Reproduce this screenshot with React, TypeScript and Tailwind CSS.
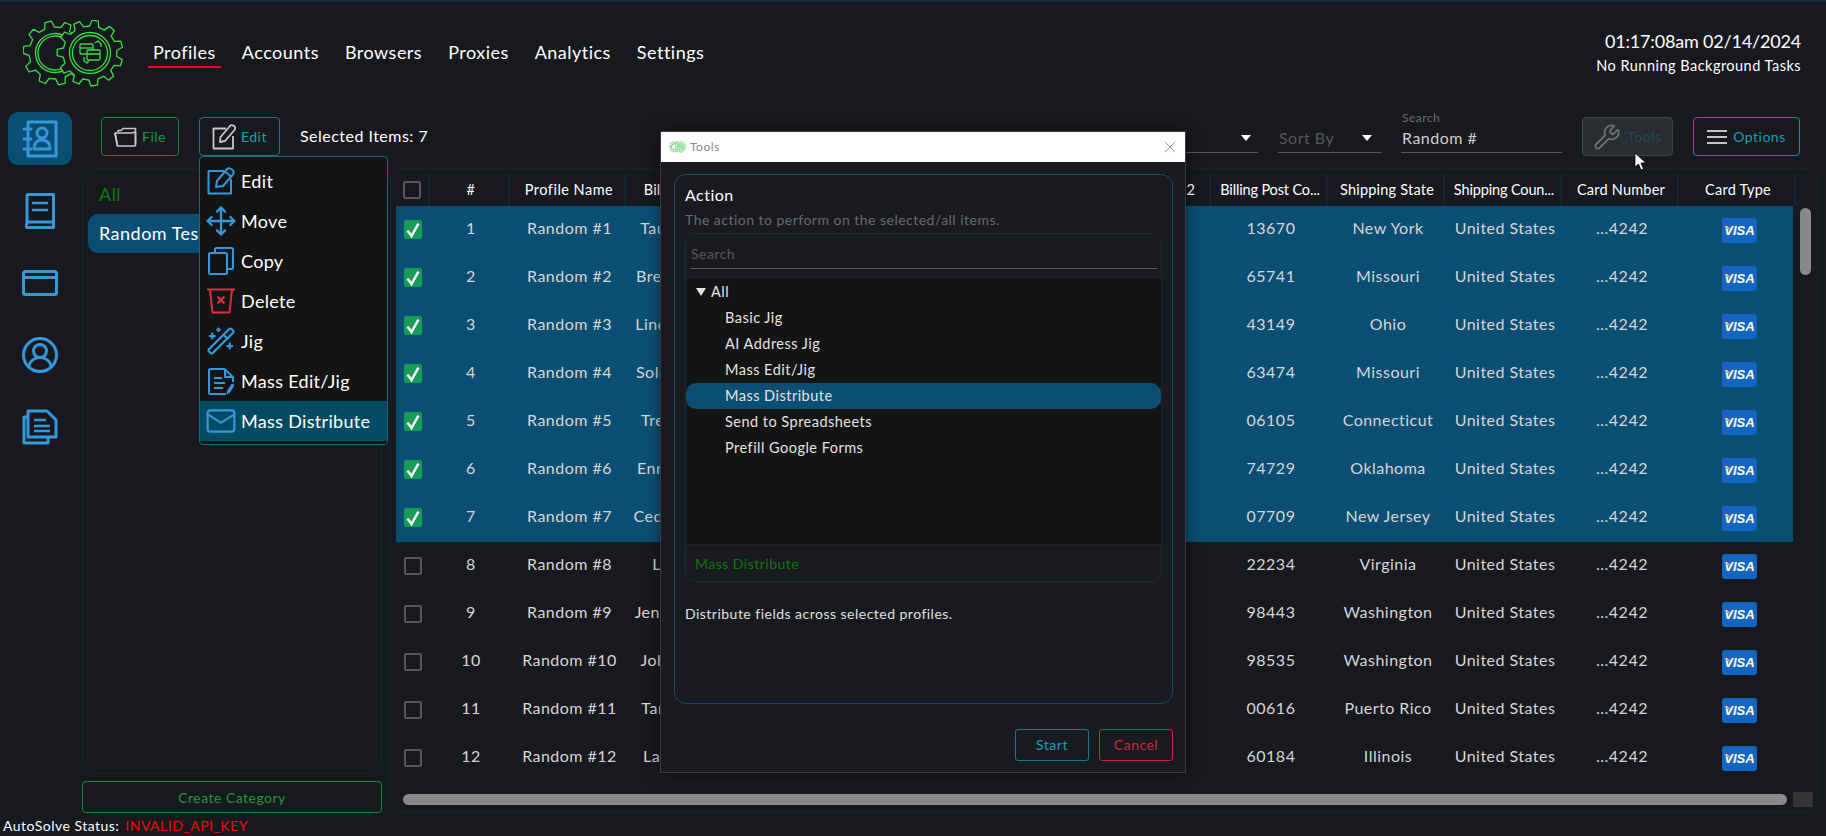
import { Mail, Move, WandSparkles, Wrench, X } from "lucide-react";

const FONT = "font-['Lato','Noto_Sans',sans-serif]";

const rows = [
  ["Taurean Hill", "13670", "New York"],
  ["Brenda Lowe", "65741", "Missouri"],
  ["Lindsey Pope", "43149", "Ohio"],
  ["Solomon Ray", "63474", "Missouri"],
  ["Trevor Lane", "06105", "Connecticut"],
  ["Enrique Diaz", "74729", "Oklahoma"],
  ["Cedric Moore", "07709", "New Jersey"],
  ["Lin Ortiz", "22234", "Virginia"],
  ["Jenna Walker", "98443", "Washington"],
  ["John Parker", "98535", "Washington"],
  ["Tara Jensen", "00616", "Puerto Rico"],
  ["Lana Reyes", "60184", "Illinois"],
];

const columns = [
  "Billing Name",
  "Billing Country",
  "Billing State",
  "Billing Line 1",
  "Billing Line 2",
  "Billing Post Co...",
  "Shipping State",
  "Shipping Coun...",
  "Card Number",
  "Card Type",
];

const navItems = ["Profiles", "Accounts", "Browsers", "Proxies", "Analytics", "Settings"];
const treeItems = ["Basic Jig", "AI Address Jig", "Mass Edit/Jig", "Mass Distribute", "Send to Spreadsheets", "Prefill Google Forms"];

// gear outline with square-ish teeth
function gearPath(cx: number, cy: number, rOut: number, rIn: number, teeth: number, start = 0) {
  const pts: string[] = [];
  const step = (Math.PI * 2) / teeth;
  for (let i = 0; i < teeth; i++) {
    const a = start + i * step;
    const list: [number, number][] = [
      [rIn, a - step * 0.3],
      [rOut, a - step * 0.17],
      [rOut, a + step * 0.17],
      [rIn, a + step * 0.3],
    ];
    list.forEach(([r, t]) => pts.push(`${(cx + r * Math.cos(t)).toFixed(1)},${(cy + r * Math.sin(t)).toFixed(1)}`));
  }
  return `M${pts.join("L")}Z`;
}

function Logo({ width = 100, height = 68, color = "#3ddc45", weight = 1.3, bg = "#17191e" }) {
  return (
    <svg width={width} height={height} viewBox="0 0 100 68" fill="none" stroke={color} strokeWidth={weight} strokeLinejoin="round">
      <path d={gearPath(32, 33, 32, 26, 10, 0.1)} />
      <circle cx="32" cy="33" r="19.5" strokeDasharray="94 30" transform="rotate(40 32 33)" />
      <circle cx="32" cy="33" r="17" strokeDasharray="82 25" transform="rotate(40 32 33)" />
      <path d={gearPath(67, 33, 33, 27, 11, 0.3)} fill={bg} />
      <circle cx="67" cy="33" r="20.5" />
      <circle cx="67" cy="33" r="17.5" />
      <rect x="57" y="24" width="13" height="10" rx="1" />
      <path d="M57 28h13" />
      <rect x="64" y="30" width="13" height="10" rx="1" fill={bg} />
      <path d="M64 34h13M72 23l3-2 3 3v3M61 37v4l3 2 2-2" />
    </svg>
  );
}

function ContactBook() {
  return (
    <svg width="36" height="38" viewBox="0 0 36 38" fill="none" stroke="#3498db" strokeWidth="3" strokeLinejoin="round">
      <rect x="6" y="2" width="28" height="34" />
      <path d="M2 9h7M2 19h7M2 29h7" strokeLinecap="round" />
      <circle cx="20" cy="13" r="5" />
      <path d="M12 29c0-6 3-9 8-9s8 3 8 9z" />
    </svg>
  );
}

function BookIcon() {
  return (
    <svg width="30" height="36" viewBox="0 0 30 36" fill="none" stroke="#3498db" strokeWidth="3" strokeLinejoin="round">
      <path d="M2 31V3a1.500 1.500 0 0 1 1.500-1.500H28.500V34.500H4A2 2 0 0 1 2 31ZM2 29H28.500" />
      <path d="M7 10h16M7 17h16" strokeWidth="2.600" />
    </svg>
  );
}

function CardIcon() {
  return (
    <svg width="36" height="26" viewBox="0 0 36 26" fill="none" stroke="#3498db" strokeWidth="3" strokeLinejoin="round">
      <rect x="1.500" y="1.500" width="33" height="23" rx="2" />
      <path d="M1.500 7.500h33" />
    </svg>
  );
}

function UserIcon() {
  return (
    <svg width="36" height="36" viewBox="0 0 36 36" fill="none" stroke="#3498db" strokeWidth="3">
      <circle cx="18" cy="18" r="16.500" />
      <circle cx="18" cy="14" r="6.500" />
      <path d="M6.500 30c1.500-6 6-9.500 11.500-9.500S28 24 29.500 30" />
    </svg>
  );
}

function DocsIcon() {
  return (
    <svg width="36" height="36" viewBox="0 0 36 36" fill="none" stroke="#3498db" strokeWidth="3" strokeLinejoin="round">
      <path d="M6 2h19l9 9v17H6z" />
      <path d="M6 8H2v26h24v-6" />
      <path d="M12 11h12M12 17h16M12 22h16" strokeWidth="2.600" />
    </svg>
  );
}

function EditMenuIcon() {
  return (
    <svg width="28" height="28" viewBox="0 0 28 28" fill="none" stroke="#3498db" strokeWidth="2" strokeLinejoin="round">
      <path d="M17 4H1.500v22.500H24V12" />
      <path d="M9 20l1-6L20 2c1-1 3-1 5 .500s2 3.500 1 5L16 19z" />
      <path d="M18 4.500l6 5" />
    </svg>
  );
}

function CopyIcon() {
  return (
    <svg width="26" height="28" viewBox="0 0 26 28" fill="none" stroke="#3498db" strokeWidth="2" strokeLinejoin="round">
      <rect x="7" y="1" width="18" height="21" rx="1.500" />
      <rect x="1" y="6" width="18" height="21" rx="1.500" fill="#141414" />
    </svg>
  );
}

function TrashIcon() {
  return (
    <svg width="28" height="26" viewBox="0 0 28 26" fill="none" stroke="#dc2e45" strokeWidth="2" strokeLinejoin="round">
      <path d="M0 1.500h28M3 2l2.500 22.500h17L25 2" />
      <path d="M10.500 8.500l7 7M17.500 8.500l-7 7" strokeWidth="2.200" />
    </svg>
  );
}

function MassEditIcon() {
  return (
    <svg width="26" height="27" viewBox="0 0 26 27" fill="none" stroke="#3498db" strokeWidth="2" strokeLinejoin="round">
      <path d="M18 26H2.500a1.500 1.500 0 0 1-1.500-1.500V2.500A1.500 1.500 0 0 1 2.500 1h14L25 9v5" />
      <path d="M17 1v8h8M6 10h8M6 15h11M6 20h9" />
      <path d="M19 26l1-4 4-6 2 1-4 7z" fill="#3498db" strokeWidth="1" />
    </svg>
  );
}

function FolderIcon() {
  return (
    <svg width="24" height="24" viewBox="0 0 24 24" fill="none" stroke="#c9c9c9" strokeWidth="1.600" strokeLinejoin="round">
      <path d="M4 7V5.500h3l2-2h12.500V19" />
      <path d="M1 8h17l3.500-1v13a1 1 0 0 1-1 1H3.500z" />
      <path d="M1 8l2.500 13" />
    </svg>
  );
}

function PencilSquareIcon() {
  return (
    <svg width="24" height="26" viewBox="0 0 24 26" fill="none" stroke="#c9c9c9" strokeWidth="1.800" strokeLinejoin="round">
      <path d="M14 4.500H1.500v20H21V12" />
      <path d="M8 18l.500-5L18 2c1-1 2.500-1 4 0s1.500 2.500.500 4L13 17z" />
    </svg>
  );
}

function Visa() {
  return (
    <div className="relative flex h-[25px] w-[35px] items-center justify-center rounded-[3px] bg-[#1565c0] font-['Liberation_Sans',sans-serif] tracking-normal">
      <span className="text-[13px] font-bold italic leading-none text-white">VISA</span>
      <span className="absolute left-[3px] top-[9px] h-[2px] w-[5px] rotate-[20deg] bg-[#f5b32a]" />
    </div>
  );
}

function Checkbox({ checked }: { checked?: boolean }) {
  if (checked) {
    return (
      <div className="flex h-[19px] w-[18px] items-center justify-center rounded-[2px] bg-[#169c58]">
        <svg width="14" height="16" viewBox="0 0 14 16" fill="none" stroke="#fff" strokeWidth="2.500">
          <path d="M1.500 8.500L5.500 14 12.500 1.500" />
        </svg>
      </div>
    );
  }
  return <div className="h-[18px] w-[18px] rounded-[2px] border-2 border-[#55585c]" />;
}

const menu = [
  { label: "Edit", icon: <EditMenuIcon /> },
  { label: "Move", icon: <Move size={32} color="#3498db" strokeWidth={1.700} className="shrink-0" /> },
  { label: "Copy", icon: <CopyIcon /> },
  { label: "Delete", icon: <TrashIcon /> },
  { label: "Jig", icon: <WandSparkles size={30} color="#3498db" strokeWidth={1.800} className="shrink-0" /> },
  { label: "Mass Edit/Jig", icon: <MassEditIcon /> },
  { label: "Mass Distribute", icon: <Mail size={32} color="#3498db" strokeWidth={1.600} className="shrink-0" /> },
];

export default function App() {
  return (
    <div className={`relative flex h-[836px] w-[1826px] flex-col overflow-hidden border-t-2 border-[#1a2a36] bg-[#17191e] tracking-[0.03em] text-white ${FONT}`}>
      {/* Header */}
      <div className="flex h-[110px] shrink-0 items-start">
        <div className="pl-[23px] pt-[18px]">
          <Logo />
        </div>
        <nav className="ml-[25px] flex gap-[16px] pt-[37px]">
          {navItems.map((n, i) => (
            <div key={n} className={`border-b-2 px-[5px] pb-[1px] text-[18px] leading-[26px] ${i === 0 ? "border-[#e0101c]" : "border-transparent"}`}>
              {n}
            </div>
          ))}
        </nav>
        <div className="ml-auto pr-[25px] pt-[26px] text-right">
          <div className="text-[18px] leading-[26px] tracking-[-0.01em]">01:17:08am 02/14/2024</div>
          <div className="mt-[2px] text-[14.500px] leading-[20px]">No Running Background Tasks</div>
        </div>
      </div>

      <div className="flex min-h-0 flex-1">
        {/* Sidebar */}
        <div className="flex w-[82px] shrink-0 flex-col gap-[19px] pl-2">
          <div className="flex h-[53px] w-[64px] items-center justify-center rounded-[10px] bg-[#0a4f73]">
            <ContactBook />
          </div>
          <div className="flex h-[53px] w-[64px] items-center justify-center"><BookIcon /></div>
          <div className="flex h-[53px] w-[64px] items-center justify-center"><CardIcon /></div>
          <div className="flex h-[53px] w-[64px] items-center justify-center"><UserIcon /></div>
          <div className="flex h-[53px] w-[64px] items-center justify-center"><DocsIcon /></div>
        </div>

        <div className="flex min-w-0 flex-1 flex-col">
          {/* Toolbar */}
          <div className="flex h-[56px] shrink-0 items-start pl-[19px] pr-[26px] pt-[5px]">
            <button className="flex h-[39px] w-[78px] items-center justify-center gap-[4px] rounded-[4px] border border-[#1f8a3c] text-[14px] text-[#1f9a3f]">
              <FolderIcon />
              File
            </button>
            <button className="ml-[20px] flex h-[39px] w-[81px] items-center justify-center gap-[5px] rounded-[4px] border border-[#15788c] text-[14px] text-[#17a2b8]">
              <PencilSquareIcon />
              Edit
            </button>
            <div className="ml-[20px] pt-[8px] text-[16px] leading-[22px]">Selected Items: 7</div>
            <div className="ml-auto flex items-start gap-[20px]">
              <div className="flex h-[36px] w-[103px] items-center justify-end border-b border-[#55585c] pr-[7px] pt-[6px]">
                <span className="h-0 w-0 border-x-[5px] border-t-[6px] border-x-transparent border-t-white" />
              </div>
              <div className="flex h-[36px] w-[103px] items-center justify-between border-b border-[#55585c] pl-[1px] pr-[9px] pt-[6px] text-[16px] text-[#55585c]">
                Sort By
                <span className="h-0 w-0 border-x-[5px] border-t-[6px] border-x-transparent border-t-white" />
              </div>
              <div className="-mt-[7px] h-[43px] w-[161px] border-b border-[#55585c] pl-[1px]">
                <div className="text-[12px] leading-[16px] text-[#6b6e72]">Search</div>
                <div className="text-[16px] leading-[24px] text-[#cfcfcf]">Random #</div>
              </div>
              <button className="flex h-[39px] w-[91px] items-center justify-center gap-[6px] rounded-[4px] border border-[#37454c] bg-[#2a2d31] text-[14px] text-[#1c4a58]">
                <Wrench size={28} color="#70757a" strokeWidth={1.500} className="shrink-0" />
                Tools
              </button>
              <button className="flex h-[39px] w-[107px] items-center justify-center gap-[6px] rounded-[4px] border border-[#158aa0] text-[14px] text-[#17a2b8]">
                <svg width="20" height="16" viewBox="0 0 20 16" stroke="#c4c4c4" strokeWidth="2">
                  <path d="M0 2h20M0 8h20M0 14h20" />
                </svg>
                Options
              </button>
            </div>
          </div>

          {/* Panels */}
          <div className="flex min-h-0 flex-1 gap-2 pr-2">
            <div className="mb-[1px] flex w-[300px] shrink-0 flex-col gap-[7px]">
              <div className="flex-1 rounded-[12px] border border-[#14232e] px-[5px]">
                <div className="pl-[11px] pt-[13px] text-[18px] leading-[24px] text-[#0b7a0b]">All</div>
                <div className="mt-[8px] flex h-[39px] items-center rounded-[10px] bg-[#0a4f73] pl-[11px] text-[18px]">Random Test</div>
              </div>
              <button className="h-[32px] rounded-[4px] border border-[#1f8a3c] text-[14px] text-[#1f9a3f]">Create Category</button>
            </div>

            <div className="relative mb-[2px] flex min-w-0 flex-1 flex-col overflow-hidden rounded-[12px] border border-[#14232e] pl-[5px]">
              <div className="grid h-[37px] shrink-0 grid-cols-[34px_80px_116px_repeat(10,117px)] items-end text-center text-[14.500px]">
                <div className="flex h-[32px] items-center justify-center border-r-2 border-[#152530]"><Checkbox /></div>
                <div className="flex h-[32px] items-center justify-center border-r-2 border-[#152530] pl-[4px]">#</div>
                <div className="flex h-[32px] items-center justify-center border-r-2 border-[#152530] pl-[4px]">Profile Name</div>
                {columns.map((c) => (
                  <div key={c} className={`flex h-[32px] items-center justify-center whitespace-nowrap border-r-2 border-[#152530] pl-[3px] ${c.endsWith("...") ? "tracking-[-0.01em]" : "tracking-[0.015em]"}`}>{c}</div>
                ))}
              </div>
              <div className="w-[1397px] flex-1 overflow-hidden">
                {rows.map((r, i) => (
                  <div key={i} className={`grid h-[48px] w-[1400px] grid-cols-[34px_80px_116px_repeat(10,117px)] items-center text-center text-[16px] text-[#d6d6d6] ${i < 7 ? "bg-[#0a4f73]" : ""}`}>
                    <div className="flex justify-center pb-[1px]"><Checkbox checked={i < 7} /></div>
                    <div className="pb-[4px] pl-[2px]">{i + 1}</div>
                    <div className="whitespace-nowrap pb-[4px] pl-[3px]">Random #{i + 1}</div>
                    <div className="whitespace-nowrap pb-[4px]">{r[0]}</div>
                    <div />
                    <div />
                    <div />
                    <div />
                    <div className="pb-[4px] pl-[3px]">{r[1]}</div>
                    <div className="pb-[4px] pl-[3px]">{r[2]}</div>
                    <div className="whitespace-nowrap pb-[4px] pl-[3px]">United States</div>
                    <div className="pb-[4px] pl-[3px]">...4242</div>
                    <div className="flex justify-center pl-[4px]"><Visa /></div>
                  </div>
                ))}
              </div>
              {/* scrollbars */}
              <div className="absolute left-[12px] top-[625px] h-[11px] w-[1384px] rounded-full bg-[#8a8a8a]" />
              <div className="absolute left-[1402px] top-[623px] h-[15px] w-[20px] bg-[#333436]" />
              <div className="absolute left-[1409px] top-[39px] h-[67px] w-[11px] rounded-full bg-[#888]" />
            </div>
          </div>
        </div>
      </div>

      {/* Status */}
      <div className="flex h-[22px] shrink-0 items-center gap-[6px] pl-[3px] text-[14px]">
        <span>AutoSolve Status:</span>
        <span className="text-[#f00]">INVALID_API_KEY</span>
      </div>

      {/* Edit dropdown */}
      <div className="absolute left-[199px] top-[154px] flex h-[289px] w-[189px] flex-col rounded-[4px] border border-[#156a7a] bg-[#141414] pt-[4px] tracking-[0.02em]">
        {menu.map((m) => (
          <div key={m.label} className={`flex h-[40px] shrink-0 items-center gap-[6px] pl-[7px] text-[18px] ${m.label === "Mass Distribute" ? "bg-[#034b63]" : ""}`}>
            <span className="flex w-[28px] justify-center">{m.icon}</span>
            {m.label}
          </div>
        ))}
      </div>

      {/* Tools modal */}
      <div className="absolute left-[660px] top-[129px] flex h-[642px] w-[526px] flex-col border border-[#3a3c40] bg-[#181a1f] shadow-[0_0_12px_rgba(0,0,0,0.5)]">
        <div className="flex h-[30px] shrink-0 items-center bg-white pl-[8px] pr-[5px] text-[12px] text-[#8a8a8a]">
          <span className="mr-[4px] flex">
            <Logo width={17} height={12} color="#7fd486" weight={5} bg="#ffffff" />
          </span>
          Tools
          <X size={20} color="#8a8a8a" strokeWidth={1.100} className="ml-auto" />
        </div>
        <div className="ml-[13px] mr-[12px] mt-[12px] flex h-[530px] flex-col rounded-[12px] border border-[#0c4e6e] px-[10px]">
          <div className="pt-[9px] text-[16px] leading-[22px]">Action</div>
          <div className="mt-[4px] text-[14px] leading-[20px] text-[#696c70]">The action to perform on the selected/all items.</div>
          <div className="mt-[3px] flex h-[349px] flex-col overflow-hidden rounded-[10px] border border-[#182a35]">
            <div className="h-[43px] shrink-0 px-[4px] pt-[8px]">
              <div className="h-[27px] border-b border-[#55585c] pl-[1px] text-[14px] leading-[24px] text-[#55585c]">Search</div>
            </div>
            <div className="h-[267px] shrink-0 border-t border-[#1c2226] bg-[#141414] pt-[1px] text-[14.500px] text-[#e4e4e4]">
              <div className="flex h-[26px] items-center pl-[10px]">
                <span className="mr-[5px] h-0 w-0 border-x-[5px] border-t-[8px] border-x-transparent border-t-[#e4e4e4]" />
                All
              </div>
              {treeItems.map((t) => (
                <div key={t} className={`flex h-[26px] items-center pl-[39px] ${t === "Mass Distribute" ? "rounded-[10px] bg-[#0a4f73]" : ""}`}>{t}</div>
              ))}
            </div>
            <div className="flex flex-1 items-center border-t border-[#1c2226] pl-[9px] text-[14px] text-[#0b7a0b]">Mass Distribute</div>
          </div>
          <div className="mt-[22px] text-[14px] leading-[20px] text-[#e0e0e0]">Distribute fields across selected profiles.</div>
        </div>
        <div className="mr-[12px] mt-[25px] flex justify-end gap-[10px] text-[14px]">
          <button className="h-[32px] w-[74px] rounded-[3px] border border-[#15788c] pb-[2px] text-[#17a2b8]">Start</button>
          <button className="h-[32px] w-[74px] rounded-[3px] border border-[#c8283c] pb-[2px] text-[#d12b40]">Cancel</button>
        </div>
      </div>

      {/* Mouse cursor */}
      <svg width="13" height="19" viewBox="0 0 13 19" className="absolute left-[1634px] top-[150px]">
        <path d="M1 1v14l3.500-3 2.500 6 2.500-1-2.500-6H12z" fill="#fff" stroke="#000" strokeWidth="0.800" />
      </svg>
    </div>
  );
}
